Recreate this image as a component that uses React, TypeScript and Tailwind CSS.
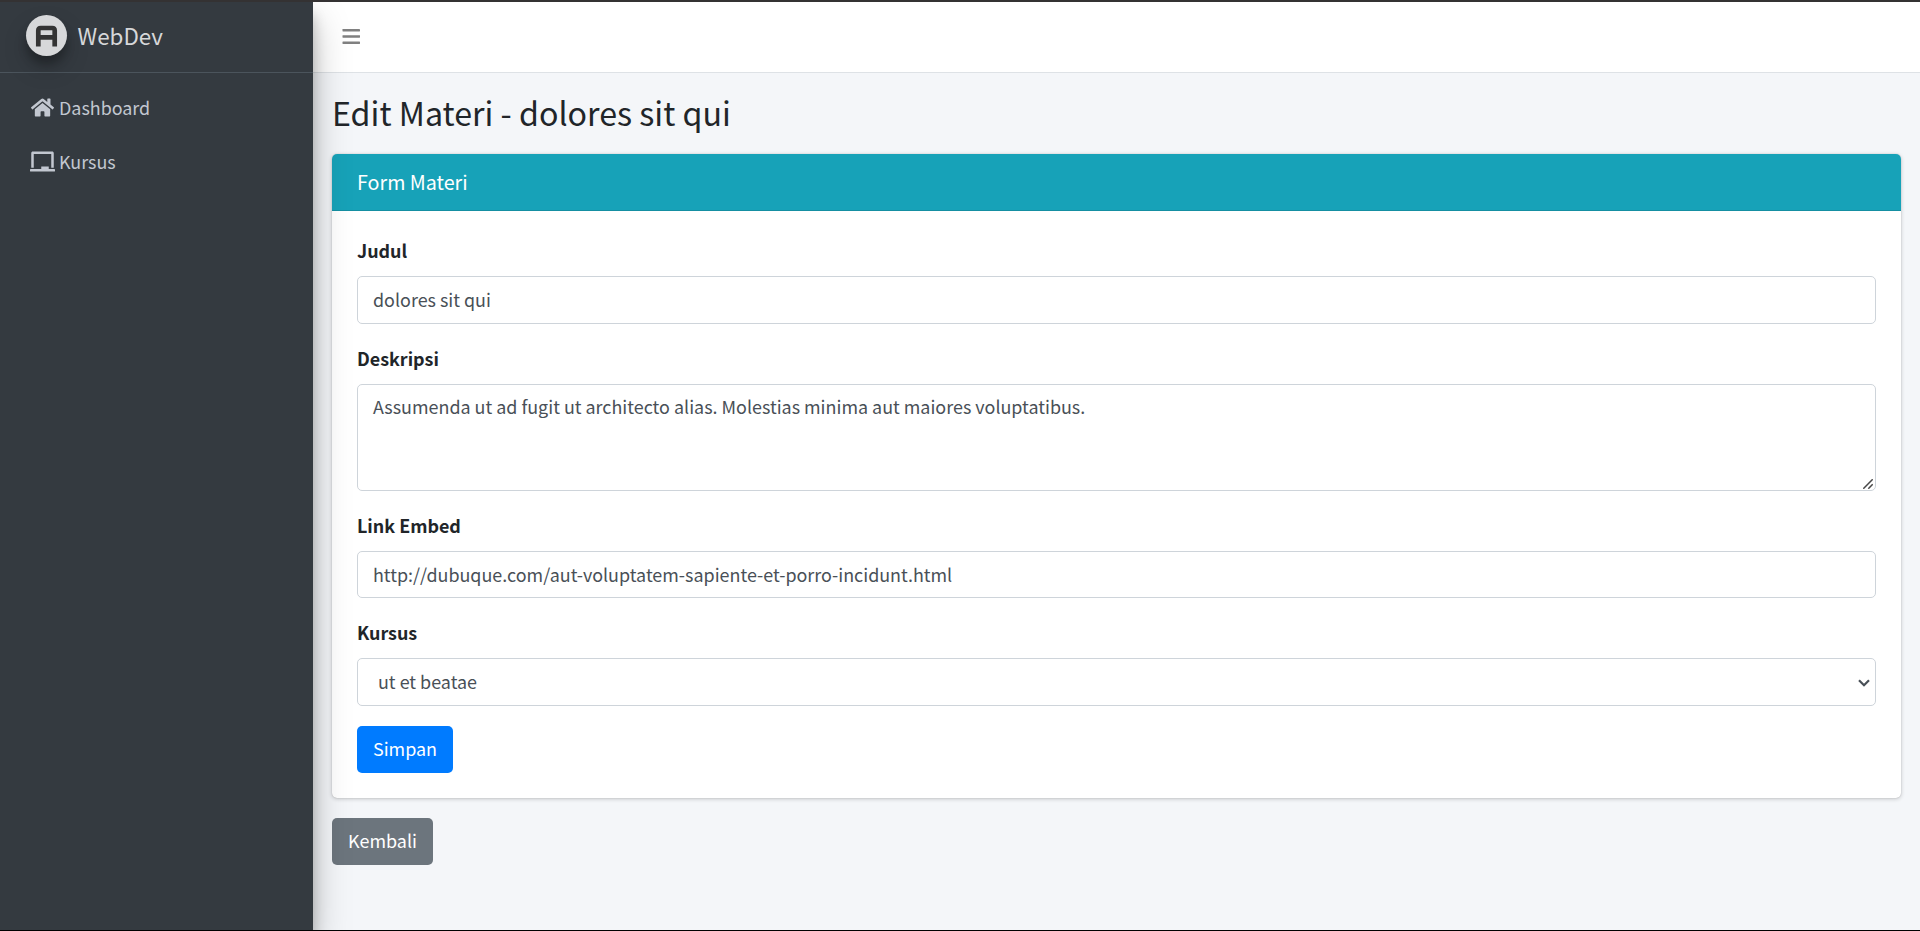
import type { ReactNode } from "react";
import { FaChalkboard, FaHome } from "react-icons/fa";

const control =
  "block w-full rounded-[5px] border border-[#ced4da] bg-white px-[15px] text-[17.92px] leading-[30px] text-[#495057] outline-none";

function Logo() {
  return (
    <span className="flex size-[41px] items-center justify-center rounded-full bg-[#d7d8da] shadow-[0_12px_25px_rgba(0,0,0,0.19),0_8px_8px_rgba(0,0,0,0.23)]">
      <svg viewBox="0 0 41 41" className="size-[41px]" fill="none" stroke="#343434" strokeWidth="4.7">
        <path d="M12.3 31.4V15.5Q12.3 13 14.8 13H26.2Q28.7 13 28.7 15.5V31.4M12.3 22.4H28.7" />
      </svg>
    </span>
  );
}

function MenuIcon() {
  return (
    <svg viewBox="0 0 18 15" className="h-[15px] w-[18px]" fill="#808080">
      <rect x="0.5" y="0" width="17.5" height="2.5" rx="0.4" />
      <rect x="0.5" y="6.2" width="17.5" height="2.5" rx="0.4" />
      <rect x="0.5" y="12.5" width="17.5" height="2.5" rx="0.4" />
    </svg>
  );
}

function NavItem({ icon, label }: { icon: ReactNode; label: string }) {
  return (
    <a href="#" className="flex h-[54px] items-center pl-[30px] text-[17.92px] leading-[30px] text-[#c2c7d0]">
      <span className="flex w-[25px] justify-center">{icon}</span>
      <span className="pl-[4px]">{label}</span>
    </a>
  );
}

function Field({ label, children }: { label: string; children: ReactNode }) {
  return (
    <div className="mb-[20px]">
      <label className="mb-[12px] block text-[17.92px] leading-[28px] font-bold">{label}</label>
      {children}
    </div>
  );
}

export default function App() {
  return (
    <div className="flex h-[931px] flex-col overflow-hidden border-t-2 border-b border-t-[#343233] border-b-black bg-[#f4f6f9] font-['Noto_Sans_CJK_SC','Noto_Sans',sans-serif] text-[#212529]">
      <div className="flex min-h-0 flex-1 overflow-hidden">
        <aside className="relative z-10 w-[313px] shrink-0 bg-[#343a40] shadow-[0_17.5px_35px_rgba(0,0,0,0.25),0_12.5px_12.5px_rgba(0,0,0,0.22)]">
          <a href="#" className="flex h-[71px] items-start border-b border-[#4b545c] pt-[13px] pl-[26px]">
            <Logo />
            <span className="pl-[10.5px] text-[22.4px] leading-[41px] text-[#d6d7d9]">WebDev</span>
          </a>
          <nav className="pt-[7px]">
            <NavItem icon={<FaHome size={23} />} label="Dashboard" />
            <NavItem icon={<FaChalkboard size={25} className="shrink-0" />} label="Kursus" />
          </nav>
        </aside>

        <div className="flex min-w-0 flex-1 flex-col">
          <header className="flex h-[71px] shrink-0 items-center border-b border-[#dee2e6] bg-white pb-px pl-[29px]">
            <MenuIcon />
          </header>

          <main className="pr-[19px] pl-[19px]">
            <h1 className="pt-[18px] text-[32.2px] leading-[43px]">Edit Materi - dolores sit qui</h1>

            <section className="mt-[20px] mb-[20px] rounded-[5px] bg-white shadow-[0_0_1px_rgba(0,0,0,0.25),0_1px_4px_rgba(0,0,0,0.2)]">
              <div className="h-[57px] rounded-t-[5px] border-b border-[#158fa2] bg-[#17a2b8] px-[25px] pt-[14px] text-[19.7px] leading-[27px] text-white">
                Form Materi
              </div>
              <form className="p-[25px]">
                <Field label="Judul">
                  <input className={`${control} h-[48px] pb-[2px]`} defaultValue="dolores sit qui" />
                </Field>
                <Field label="Deskripsi">
                  <div className="relative">
                    <textarea
                      className={`${control} h-[107px] resize-none py-[6px]`}
                      defaultValue="Assumenda ut ad fugit ut architecto alias. Molestias minima aut maiores voluptatibus."
                    />
                    <svg viewBox="0 0 10 10" className="absolute right-[3px] bottom-[2px] size-[10px]" stroke="#484848" strokeWidth="1.5">
                      <path d="M0.3 9.7L9.7 0.3M5.3 9.7L9.7 5.3" />
                    </svg>
                  </div>
                </Field>
                <Field label="Link Embed">
                  <input
                    className={`${control} h-[47px] pb-px`}
                    defaultValue="http://dubuque.com/aut-voluptatem-sapiente-et-porro-incidunt.html"
                  />
                </Field>
                <Field label="Kursus">
                  <div className="relative">
                    <select className={`${control} h-[48px] appearance-none pb-[2px] pl-[20px]`}>
                      <option>ut et beatae</option>
                    </select>
                    <svg viewBox="0 0 12 8" className="absolute top-[20.5px] right-[6px] h-[8px] w-[12px]" fill="none" stroke="#495057" strokeWidth="2.2">
                      <path d="M1 1.2L6 6.2L11 1.2" />
                    </svg>
                  </div>
                </Field>
                <button type="button" className="block h-[47px] w-[96px] rounded-[5px] bg-[#007bff] pb-[3px] text-[17.92px] leading-[30px] text-white">
                  Simpan
                </button>
              </form>
            </section>

            <button type="button" className="block h-[47px] w-[101px] rounded-[5px] bg-[#6c757d] pb-[3px] text-[17.92px] leading-[30px] text-white">
              Kembali
            </button>
          </main>
        </div>
      </div>
    </div>
  );
}
